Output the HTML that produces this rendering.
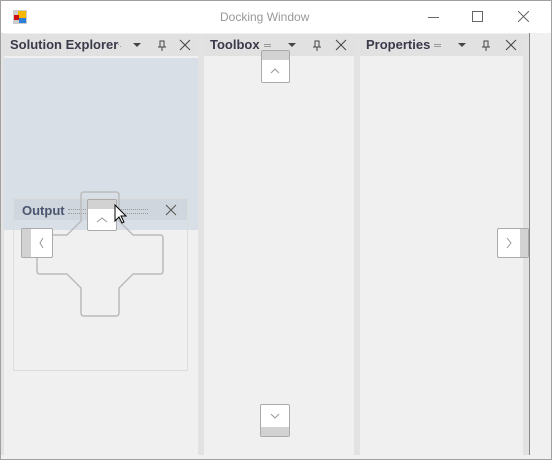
<!DOCTYPE html>
<html><head><style>
body{margin:0;width:552px;height:460px;overflow:hidden;background:#fff;font-family:"Liberation Sans",sans-serif;position:relative}
.a{position:absolute}
.h{font-weight:bold;font-size:13px;color:#3a3a4a}
</style></head><body>
<div class="a" style="left:0;top:0;width:550px;height:458px;border:1px solid #a0a0a0;background:#f0f0f0"></div>
<div class="a" style="left:1px;top:1px;width:550px;height:32px;background:#fff"></div>
<svg class="a" style="left:13px;top:10px" width="14" height="14"><rect x="0" y="0" width="14" height="14" fill="#ccc"/><rect x="5" y="1" width="8" height="7" fill="#f6b700"/><rect x="1" y="5" width="5" height="5" fill="#d01010"/><rect x="6" y="8" width="7" height="5" fill="#2a7fd8"/></svg>
<div class="a" style="left:220px;top:10px;font-size:12px;color:#999">Docking Window</div>
<div class="a" style="left:428px;top:17px;width:11px;height:1px;background:#666"></div>
<div class="a" style="left:472px;top:11px;width:9px;height:9px;border:1px solid #666"></div>
<svg class="a" style="left:518px;top:11px" width="11" height="11"><path d="M0 0L11 11M11 0L0 11" stroke="#666"/></svg>
<div class="a" style="left:198px;top:34px;width:6px;height:421px;background:#e2e2e2"></div>
<div class="a" style="left:354px;top:34px;width:6px;height:421px;background:#e2e2e2"></div>
<div class="a" style="left:523px;top:34px;width:6px;height:421px;background:#e2e2e2"></div>
<div class="a" style="left:529px;top:33px;width:1px;height:422px;background:#888"></div>
<div class="a" style="left:1px;top:33px;width:3px;height:422px;background:#e2e2e2"></div>
<div class="a" style="left:4px;top:34px;width:194px;height:22px;background:#e1e1e1"></div>
<div class="a" style="left:204px;top:34px;width:150px;height:22px;background:#e1e1e1"></div>
<div class="a" style="left:360px;top:34px;width:163px;height:22px;background:#e1e1e1"></div>
<div class="a h" style="left:10px;top:37px">Solution Explorer</div>
<div class="a h" style="left:210px;top:37px">Toolbox</div>
<div class="a h" style="left:366px;top:37px">Properties</div>
<svg class="a" style="left:0;top:34px" width="552" height="22" fill="#444" stroke="#444">
<g stroke="none"><path d="M133 9h8l-4 4z"/><path d="M288 9h8l-4 4z"/><path d="M458 9h8l-4 4z"/></g>
<g fill="none"><path d="M158 13h8M160 13v-6h4v6M162 13v4"/><path d="M313 13h8M315 13v-6h4v6M317 13v4"/><path d="M482 13h8M484 13v-6h4v6M486 13v4"/>
<path d="M180 6l10 10M190 6l-10 10"/><path d="M336 6l10 10M346 6l-10 10"/><path d="M506 6l10 10M516 6l-10 10"/></g>
<g stroke="none" fill="#999"><rect x="118" y="10" width="1" height="1"/><rect x="120" y="12" width="1" height="1"/><rect x="264" y="10" width="7" height="1"/><rect x="264" y="12" width="7" height="1"/><rect x="434" y="10" width="7" height="1"/><rect x="434" y="12" width="7" height="1"/></g>
</svg>
<div class="a" style="left:4px;top:58px;width:194px;height:172px;background:#d9dfe6"></div>
<div class="a" style="left:13px;top:198px;width:173px;height:171px;border:1px solid #dcdcdc"></div>
<div class="a" style="left:14px;top:199px;width:173px;height:21px;background:#d0d6dd"></div>
<div class="a h" style="left:22px;top:203px;color:#4a5670">Output</div>
<div class="a" style="left:68px;top:209px;width:80px;height:3px;border-top:1px dotted #999;border-bottom:1px dotted #999"></div>
<svg class="a" style="left:165px;top:204px" width="12" height="12"><path d="M1 1L11 11M11 1L1 11" stroke="#555"/></svg>
<svg class="a" style="left:0;top:0" width="552" height="460" fill="none">
<path d="M84 192h32q3 0 3 3v26l14 14h27q3 0 3 3v33q0 3-3 3h-27l-14 14v25q0 3-3 3h-32q-3 0-3-3v-25l-14-14h-27q-3 0-3-3v-33q0-3 3-3h27l14-14v-26q0-3 3-3z" stroke="#bbb" stroke-width="1.5"/>
<rect x="87.5" y="199.5" width="29" height="31" rx="1.5" fill="#fff" stroke="#aaa"/><rect x="88" y="200" width="28" height="9" fill="#d2d2d2"/>
<path d="M97 222l5-4 5 4" stroke="#999"/>
<rect x="21.5" y="228.5" width="31" height="29" rx="1.5" fill="#fff" stroke="#aaa"/><rect x="22" y="229" width="9" height="28" fill="#d2d2d2"/>
<path d="M43 238l-3 5 3 5" stroke="#999"/>
<rect x="261.5" y="50.5" width="28" height="32" rx="1.5" fill="#fff" stroke="#aaa"/><rect x="262" y="51" width="27" height="9" fill="#d2d2d2"/>
<path d="M271 73l4-4 4 4" stroke="#999"/>
<rect x="260.5" y="404.5" width="29" height="32" rx="1.5" fill="#fff" stroke="#aaa"/><rect x="261" y="427" width="28" height="9" fill="#d2d2d2"/>
<path d="M271 414l4 4 4-4" stroke="#999"/>
<rect x="497.5" y="228.5" width="31" height="29" rx="1.5" fill="#fff" stroke="#aaa"/><rect x="520" y="229" width="8" height="28" fill="#d2d2d2"/>
<path d="M507 238l4 5-4 5" stroke="#999"/>
<path d="M115 205v16l4-4 3 6 2-1-3-6h5z" fill="#fff" stroke="#000"/>
</svg>
</body></html>
